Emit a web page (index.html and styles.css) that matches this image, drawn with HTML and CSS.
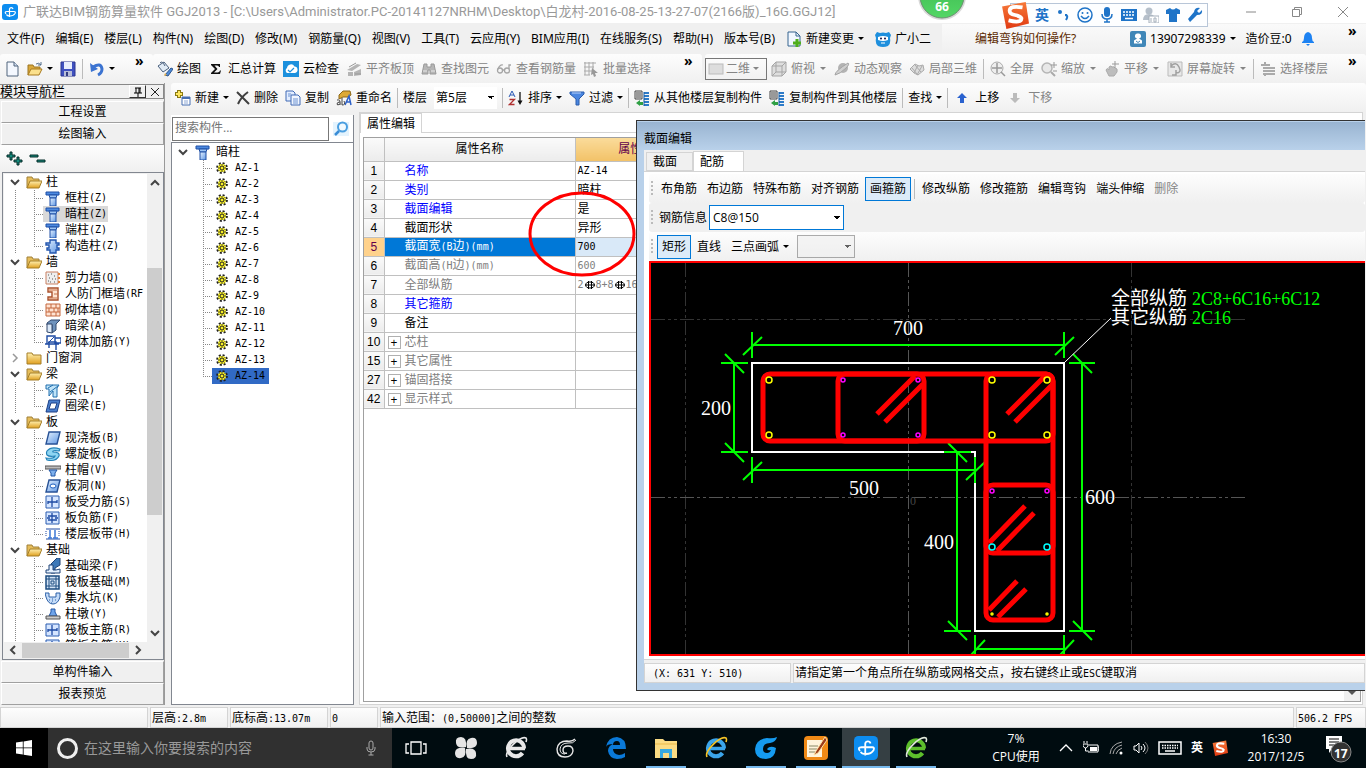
FILE: index.html
```html
<!DOCTYPE html>
<html lang="zh-CN">
<head>
    <meta charset="UTF-8">
    <meta name="viewport" content="width=device-width, initial-scale=1.0">
    <title>广联达BIM钢筋算量软件 GGJ2013</title>
    <link rel="stylesheet" href="styles.css">
</head>
<body>
<!-- icon sprite -->
<svg class="sprite" aria-hidden="true">
    <defs>
        <linearGradient id="gFolder" x1="0" y1="0" x2="0" y2="1"><stop offset="0" stop-color="#fff0b0"/><stop offset="1" stop-color="#e0a020"/></linearGradient>
        <linearGradient id="gBlue" x1="0" y1="0" x2="1" y2="1"><stop offset="0" stop-color="#e6f2ff"/><stop offset="1" stop-color="#5d96e4"/></linearGradient>
        <linearGradient id="gBall" x1="0" y1="0" x2="0" y2="1"><stop offset="0" stop-color="#3ab34d"/><stop offset="1" stop-color="#53d765"/></linearGradient>
        <linearGradient id="gOrange" x1="0" y1="0" x2="0" y2="1"><stop offset="0" stop-color="#f77a3a"/><stop offset="1" stop-color="#e03a12"/></linearGradient>
    </defs>
    <symbol id="app" viewBox="0 0 16 16"><rect width="16" height="16" rx="3" fill="#0d8df0"/><path d="M11 5a1.800 1.800 0 0 0-3.500 0v8M4 10q-2-2.500 1-2.500h7q2 0 1 2-1.500 2.500-5 2.500-3 0-3.500-1.500" fill="none" stroke="#fff" stroke-width="1.200"/></symbol>
    <symbol id="new" viewBox="0 0 16 16"><path d="M3 1h7l4 4v10H3z" fill="#f4f8ff" stroke="#51647d"/><path d="M10 1v4h4" fill="#cfdcf0" stroke="#51647d"/></symbol>
    <symbol id="open" viewBox="0 0 16 16"><path d="M1 14V4h5l1 2h6v3" fill="#d9a83b" stroke="#9c7420"/><path d="M1 14l3-6h11l-3 6z" fill="#fbe08c" stroke="#a87a1e"/><path d="M9 3q3-2 5 1m0-3v3h-3" fill="none" stroke="#55708f"/></symbol>
    <symbol id="save" viewBox="0 0 16 16"><path d="M1 1h14v14H1z" fill="#3f51c0" stroke="#2c3690"/><path d="M4 1h8v7H4z" fill="#e8eefc"/><path d="M4 10h8v5H4z" fill="#b8bed8"/><path d="M6 11h2v4H6z" fill="#333c80"/></symbol>
    <symbol id="undo" viewBox="0 0 16 16"><path d="M4 6q8-5 9 2 0 4-4 6" fill="none" stroke="#3b73d1" stroke-width="3"/><path d="M1 2l1 9 7-3z" fill="#3b73d1"/></symbol>
    <symbol id="draw" viewBox="0 0 16 16"><path d="M1 5l6-4 5 6-6 4z" fill="#e1ebf5" stroke="#4b617e"/><path d="M3 2q2-3 5 3" fill="none" stroke="#4b617e"/><path d="M8 14l6-7 2 1-5 7z" fill="#4f8bd8" stroke="#2d568f"/><path d="M7 15l1-3 2 2z" fill="#e5b04b"/></symbol>
    <symbol id="sum" viewBox="0 0 16 16"><path d="M3 3h9v3h-1q0-1.500-2-1.500H6.500L9.500 8l-3.500 3.500h3.500q2 0 2.500-2h1L12 13H3v-1l4-4-4-4z" fill="#111"/></symbol>
    <symbol id="cloud" viewBox="0 0 16 16"><rect width="16" height="16" fill="#1c90dd"/><path d="M4 12a3 3 0 0 1 0-5 4 4 0 0 1 7.500-1.500A3.300 3.300 0 0 1 12 12z" fill="#fff"/><path d="M5 9l2 2 4-4" fill="none" stroke="#1c90dd" stroke-width="1.200"/></symbol>
    <symbol id="slab" viewBox="0 0 16 16"><path d="M1 9l10-6 4 1-9 6zM2 11h5v4H2zM8 11l7-3v6l-7 1z" fill="#b4b4b4"/><path d="M3 6l7-4M9 13h6" stroke="#999"/></symbol>
    <symbol id="find" viewBox="0 0 16 16"><path d="M3 3h3v3h4V3h3l2 10H9V9H7v4H1z" fill="#b6b6b6" stroke="#999"/><path d="M2 10h4M10 10h4" stroke="#e8e8e8"/></symbol>
    <symbol id="glasses" viewBox="0 0 16 16"><g fill="none" stroke="#a5a5a5" stroke-width="1.300"><circle cx="4" cy="9.500" r="2.500"/><circle cx="11" cy="9.500" r="2.500"/><path d="M6.500 9h2M2 8q2-5 5-4M13 8V4h2"/></g></symbol>
    <symbol id="batch" viewBox="0 0 16 16"><path d="M1 2h12M1 6h10M1 10h8M2 1v13M6 1v13M10 1v7M1 14h6" stroke="#aaa"/><path d="M9 7l6 5h-3l1 3-2 1-1-3-2 1z" fill="#999"/></symbol>
    <symbol id="flat" viewBox="0 0 16 16"><rect x="1" y="3" width="14" height="10" fill="#ddd" stroke="#bbb"/></symbol>
    <symbol id="cube" viewBox="0 0 16 16"><path d="M1 5l4-4h10v10l-4 4H1z" fill="#dedede" stroke="#a5a5a5"/><path d="M1 5h10v10M11 5l4-4M5 1v10h10M5 11l-4 4" fill="none" stroke="#a5a5a5"/></symbol>
    <symbol id="orbit" viewBox="0 0 16 16"><circle cx="9" cy="7" r="5" fill="#b3b3b3"/><path d="M1 14Q1 10 14 2q2 1-2 5-6 6-11 7z" fill="#cfcfcf" stroke="#a3a3a3"/></symbol>
    <symbol id="part3d" viewBox="0 0 16 16"><path d="M1 8l5-5 4 2 4-1 1 5-6 5-4-2z" fill="#ddd" stroke="#aaa"/><path d="M3 7l5 6M6 4l6 7M9 4l-4 8M13 5l-5 9" stroke="#aaa"/></symbol>
    <symbol id="full" viewBox="0 0 16 16"><circle cx="7" cy="7" r="6" fill="#eee" stroke="#aaa"/><path d="M7 2v10M2 7h10M11 11l4 4" stroke="#999" stroke-width="1.500"/></symbol>
    <symbol id="zoomi" viewBox="0 0 16 16"><circle cx="6" cy="7" r="5" fill="#e8e8e8" stroke="#b5b5b5" stroke-width="1.500"/><path d="M10 11l4 4" stroke="#aaa" stroke-width="2"/><path d="M13 1v6M10 4h6M12 10h4" stroke="#999"/></symbol>
    <symbol id="pan" viewBox="0 0 16 16"><path d="M2 9q1-3 3 0l0-3q2-2 3 0 2-1 3 1 3 0 2 4l-3 4H5z" fill="#bdbdbd" stroke="#aaa"/><path d="M11 0v7M8 3h7" stroke="#999"/></symbol>
    <symbol id="rot" viewBox="0 0 16 16"><path d="M1 1h14v14H1z" fill="#e8e8e8" stroke="#bbb"/><path d="M4 5q5-5 8 1t-3 6M4 2v4h4M9 9v5h-4" fill="none" stroke="#a0a0a0" stroke-width="1.500"/></symbol>
    <symbol id="floors" viewBox="0 0 16 16"><path d="M1 4h9M3 7h12M3 10h12M3 13h12M5 4V1M5 13v2" stroke="#aaa" stroke-width="2"/></symbol>
    <symbol id="change" viewBox="0 0 16 16"><path d="M2 1h8l4 4v10H2z" fill="#f1f7ff" stroke="#36648f"/><path d="M10 1v4h4" fill="none" stroke="#36648f"/><path d="M11 8v8M7 12h8" stroke="#4fae1d" stroke-width="3"/></symbol>
    <symbol id="mascot" viewBox="0 0 16 16"><path d="M0 4l2-3 3 1q3-1 6 0l3-1 2 3-1 3q1 6-2 8-5 2-10 0-3-2-2-8z" fill="#1e8fdd"/><path d="M3 6q5-2 10 0v3q-5 2-10 0z" fill="#fff"/><circle cx="6" cy="7.500" r="1" fill="#114"/><circle cx="10" cy="7.500" r="1" fill="#114"/><path d="M6 12h4" stroke="#fff"/></symbol>
    <symbol id="user" viewBox="0 0 16 16"><rect width="16" height="16" rx="2" fill="#4087b8"/><path d="M8 2.500a2.500 2.500 0 0 1 1 5l3 2v3H4v-3l3-2a2.500 2.500 0 0 1 1-5z" fill="#fff"/><path d="M6 10l2 1.500 2-1.500" fill="none" stroke="#4087b8"/></symbol>
    <symbol id="bell" viewBox="0 0 16 16"><path d="M8 1q4 1 4 6 0 3 2 4v1H2v-1q2-1 2-4 0-5 4-6z" fill="#1d82f2"/><path d="M6 13h4l-2 2z" fill="#1d82f2"/></symbol>
    <symbol id="create" viewBox="0 0 16 16"><path d="M4 0v8M0 4h8" stroke="#8a7a14" stroke-width="4"/><path d="M4 1v6M1 4h6" stroke="#ffe761" stroke-width="2"/><path d="M7 7h8v8H7z" fill="#fff" stroke="#466fb2"/><path d="M7 8h8" stroke="#466fb2" stroke-width="2"/><path d="M9 11h4M9 13h4" stroke="#8fa9d6"/></symbol>
    <symbol id="del" viewBox="0 0 14 14"><path d="M1 1q6 6 12 12M12 1Q5 6 2 13" fill="none" stroke="#404040" stroke-width="2"/></symbol>
    <symbol id="copy" viewBox="0 0 16 16"><path d="M1 1h7l2 2v8H1z" fill="#e2edff" stroke="#406ab5"/><path d="M6 5h7l2 2v8H6z" fill="#f1f6ff" stroke="#406ab5"/><path d="M8 9h5M8 11h5M8 13h5M3 4h3M3 6h2" stroke="#6c93d2"/></symbol>
    <symbol id="rename" viewBox="0 0 16 16"><path d="M3 5l4-4h7l1 4-3 2H7L3 9z" fill="#dda936" stroke="#8b6718"/><path d="M9 15l4-9 2 9M10 12h4" fill="none" stroke="#2e61c8" stroke-width="1.500"/><path d="M1 10q4-1 3 5M4 12q-3 0-3 2t3 0M6 8v7q4 0 2-4" fill="none" stroke="#444"/></symbol>
    <symbol id="sort" viewBox="0 0 16 16"><path d="M1 7l3-6 3 6M2 5h4" fill="none" stroke="#2859b5"/><path d="M1.500 9.500h5l-5 5h5" fill="none" stroke="#b03030" stroke-width="1.300"/><path d="M12 2v11" stroke="#111" stroke-width="1.300"/><path d="M9.500 10.500h5L12 15z" fill="#111"/></symbol>
    <symbol id="filter" viewBox="0 0 16 16"><path d="M1 2h14v2l-5 5v6H7V9L1 4z" fill="#4a86e0" stroke="#2b5cab"/><path d="M3 3h9" stroke="#b9d3fb"/></symbol>
    <symbol id="floorcopy" viewBox="0 0 16 16"><path d="M1 1h7v8H1z" fill="#eee" stroke="#444"/><path d="M2 3h5M2 5h5M2 7h5" stroke="#444"/><path d="M10 3h5M10 6h5M10 9h5M10 12h5M10 15h5" stroke="#2d7bc8" stroke-width="2"/><path d="M10 2v14" stroke="#1a5ca0"/><path d="M2 13l4-3v2h3v3H6v1z" fill="#2fa044"/></symbol>
    <symbol id="up" viewBox="0 0 10 10"><path d="M5 0l5 5H7v5H3V5H0z" fill="#2a62cf"/></symbol>
    <symbol id="down" viewBox="0 0 10 10"><path d="M5 10l5-5H7V0H3v5H0z" fill="#bbb"/></symbol>
    <symbol id="search" viewBox="0 0 16 16"><path d="M0 1h16v14H0z" fill="#e4f3fd"/><circle cx="9.500" cy="6" r="4.500" fill="#f2faff" stroke="#4a9ee0" stroke-width="2"/><path d="M6 10l-4 4" stroke="#3a8dd6" stroke-width="2.500"/></symbol>
    <symbol id="chev" viewBox="0 0 10 10"><path d="M1 3l4 4 4-4" fill="none" stroke="#444" stroke-width="2"/></symbol>
    <symbol id="chevr" viewBox="0 0 10 10"><path d="M3 1l4 4-4 4" fill="none" stroke="#999" stroke-width="1.500"/></symbol>
    <!-- tree icons -->
    <symbol id="folder" viewBox="0 0 16 16"><path d="M1 14V3h5l1 2h6v3" fill="#e6bd5a" stroke="#a08038"/><path d="M1 14l3-7h12l-3 7z" fill="url(#gFolder)" stroke="#a57f28"/></symbol>
    <symbol id="folderc" viewBox="0 0 16 16"><path d="M1 3h5l1 2h8v9H1z" fill="url(#gFolder)" stroke="#a57f28"/></symbol>
    <symbol id="col" viewBox="0 0 16 16"><path d="M1 2h13v3H1z" fill="#4d8ae0" stroke="#1f4fa5"/><path d="M4 5h8l-1 3H5z" fill="#9cc4f5" stroke="#1f4fa5"/><path d="M5 8h6v8H5z" fill="url(#gBlue)" stroke="#1f4fa5"/></symbol>
    <symbol id="gzz" viewBox="0 0 16 16"><path d="M5 2h6v3h3v2h-2v3h2v2h-3v3H5v-3H2v-2h2V7H1V5h4z" fill="url(#gBlue)" stroke="#2356ae" stroke-width="1.400"/></symbol>
    <symbol id="wall" viewBox="0 0 16 16"><path d="M1 2h12v12H1z" fill="#eee" stroke="#c98062"/><path d="M3 5h1M6 4h1M9 6h1M4 8h1M7 9h1M10 9h1M5 12h1M9 12h1M3 11h1" stroke="#555"/><path d="M13 4h2M13 8h2M13 12h2" stroke="#e08038" stroke-width="2"/></symbol>
    <symbol id="rfwall" viewBox="0 0 16 16"><path d="M3 2h10v12H3v-3h4V6H3z" fill="#ffe5d3" stroke="#a9502c" stroke-width="1.400"/><path d="M4 4h8M9 8h4M4 12h8" stroke="#c67149"/></symbol>
    <symbol id="brick" viewBox="0 0 16 16"><path d="M1 2h14v12H1z" fill="#ffe3d2" stroke="#c5693e"/><path d="M1 6h14M1 10h14M6 2v4M11 2v4M4 6v4M9 6v4M13 6v4M6 10v4M11 10v4" stroke="#c5693e"/></symbol>
    <symbol id="albeam" viewBox="0 0 16 16"><path d="M2 5l4-3h9l-4 4v6l-4 3V7H2z" fill="#6f93bd" stroke="#32496d"/><path d="M2 6h5v9l-5-1z" fill="#dce9f8" stroke="#32496d"/></symbol>
    <symbol id="rebarw" viewBox="0 0 16 16"><path d="M2 2h8v8H2zM0 10h14M4 14V8h7v8M10 4h6v5h-6" fill="none" stroke="#1e4ba4" stroke-width="1.400"/><path d="M3 9l6-6" stroke="#1e4ba4"/></symbol>
    <symbol id="beam" viewBox="0 0 16 16"><path d="M1 3h13l-2 3v9H8V9l-4 5V7H1z" fill="#bfe3f8" stroke="#216fae"/><path d="M3 6l5-3M5 10l8-6" stroke="#216fae"/></symbol>
    <symbol id="ring" viewBox="0 0 16 16"><path d="M4 2h11l-3 12H1z" fill="#4a7fcc" stroke="#1c3f86"/><path d="M6 5h6l-2 6H4z" fill="#fff" stroke="#1c3f86"/></symbol>
    <symbol id="plate" viewBox="0 0 16 16"><path d="M4 2h11l-3 12H1z" fill="url(#gBlue)" stroke="#285296" stroke-width="1.400"/></symbol>
    <symbol id="spiral" viewBox="0 0 16 16"><path d="M2 5Q6 0 15 3l-1 2Q7 4 8 6q7 0 6 4-3 6-12 4l-1-2q8 1 9-2-6 1-8-1-1-2 0-4z" fill="#8ed5f2" stroke="#2482b8" stroke-width="1.200"/></symbol>
    <symbol id="cap" viewBox="0 0 16 16"><path d="M0 4h16v3H0z" fill="#bbb" stroke="#555"/><path d="M4 8h8l-2 3v3H6v-3z" fill="#7eb0ec" stroke="#2357a6"/></symbol>
    <symbol id="hole" viewBox="0 0 16 16"><path d="M4 2h11l-3 12H1z" fill="url(#gBlue)" stroke="#285296" stroke-width="1.400"/><ellipse cx="8" cy="8" rx="3" ry="2" fill="#fff" stroke="#1d5fc0"/></symbol>
    <symbol id="bar1" viewBox="0 0 16 16"><path d="M1 2h13v12H1z" fill="#d6e6ff" stroke="#2a5cb0"/><path d="M7 3v10M3 8h9M3 10V7M12 6v3" fill="none" stroke="#1e4ba4" stroke-width="1.300"/></symbol>
    <symbol id="bar2" viewBox="0 0 16 16"><path d="M1 2h13v12H1z" fill="#d6e6ff" stroke="#2a5cb0"/><path d="M7 3v10M3 6h9M3 10h9M2 8h3M10 8h3" fill="none" stroke="#1e4ba4" stroke-width="1.300"/></symbol>
    <symbol id="strip" viewBox="0 0 16 16"><path d="M1 3h14M1 13h14" stroke="#1e4ba4" stroke-width="1"/><path d="M5 4v8M10 4v8M3 12h4M8 12h5" stroke="#3d78d6" stroke-width="1.500"/><path d="M1 5v6M14 5v6" stroke="#1e4ba4" stroke-dasharray="1 1"/></symbol>
    <symbol id="fbeam" viewBox="0 0 16 16"><path d="M6 15V6l6-6h3v7l-5 3v5z" fill="#3c78b8" stroke="#1e4276"/><path d="M1 12h3V7h4v5h3l4-1v4H1z" fill="#e4f1ff" stroke="#1e4276"/></symbol>
    <symbol id="raft" viewBox="0 0 16 16"><path d="M1 2h13v13H1z" fill="#d3e3f5" stroke="#1d4c80" stroke-width="1.500"/><path d="M4 2v13M11 2v13M1 5h13M1 12h13M6 7h3v3H6z" fill="none" stroke="#1d4c80"/></symbol>
    <symbol id="pit" viewBox="0 0 16 16"><path d="M0 3h4v4h7V3h4v4q-2 7-7 7T1 7z" fill="#c5dcf8" stroke="#2d61a8"/><path d="M4 10h1M7 11h1M10 10h1M7 9h1M6 13h1" stroke="#2d61a8"/></symbol>
    <symbol id="pier" viewBox="0 0 16 16"><path d="M6 3h4v3l2 4H4l2-4z" fill="#6ea4ea" stroke="#2357a6"/><path d="M1 10h14v3H1z" fill="#ccc" stroke="#555"/></symbol>
    <symbol id="gear" viewBox="0 0 12 12"><circle cx="6" cy="6" r="4.800" fill="none" stroke="#222" stroke-width="2.200" stroke-dasharray="2 1.770"/><circle cx="6" cy="6" r="4" fill="#f6ee28"/><path d="M6 2v8M2 6h8M3.500 3.500l5 5M8.500 3.500l-5 5" stroke="#222" stroke-width=".8"/><circle cx="6" cy="6" r="1.700" fill="#f6ee28" stroke="#222" stroke-width=".6"/></symbol>
    <symbol id="rebar" viewBox="0 0 10 10"><ellipse cx="5" cy="5" rx="4.300" ry="3" fill="none" stroke="#000" stroke-width="1"/><path d="M3.500 1v8M6.500 1v8M0 5h10" stroke="#000"/></symbol>
    <!-- taskbar icons -->
    <symbol id="win" viewBox="0 0 16 16"><path d="M0 2.500l6.800-1v6H0zM7.600 1.400L16 0v7.500H7.600zM0 8.300h6.800v6.200L0 13.500zM7.600 8.300H16V16l-8.400-1.300z" fill="#fff"/></symbol>
    <symbol id="mic" viewBox="0 0 16 16"><rect x="6" y="1" width="4" height="9" rx="2" fill="none" stroke="#aaa"/><path d="M4 7v2q0 3 4 3t4-3V7M8 12v3M5.500 15h5" fill="none" stroke="#aaa"/></symbol>
    <symbol id="taskview" viewBox="0 0 24 24"><path d="M7 6h10v12H7zM5 8H2v9h3M19 8h3v9h-3" fill="none" stroke="#fff" stroke-width="1.300"/></symbol>
    <symbol id="clover" viewBox="0 0 24 24"><g fill="#e5e5e5"><path d="M12 11Q3 13 2 7t5-6q6 0 5 10z"/><path d="M13 12q-2-9 4-10t6 5q0 6-10 5z"/><path d="M12 13q9-2 10 4t-5 6q-6 0-5-10z"/><path d="M11 12q2 9-4 10t-6-5q0-6 10-5z"/></g></symbol>
    <symbol id="eie" viewBox="0 0 24 24"><path d="M20 12.500A8 8 0 1 0 18.500 17" fill="none" stroke="currentColor" stroke-width="4"/><path d="M5 12.500h16" stroke="currentColor" stroke-width="3.500"/><path d="M3 21C0 15 17-1 22 2q1 1 0 4" fill="none" stroke="var(--swoosh, currentColor)" stroke-width="1.600"/></symbol>
    <symbol id="gswirl" viewBox="0 0 24 24"><path d="M21 3q-3 3-8 2-9 0-10 8 0 8 8 8 7 0 8-6 0-5-5-5-5 0-5 4t4 3" fill="none" stroke="currentColor" stroke-width="1.400"/><path d="M22 4q-3 4-8 3-7 0-8 6 0 5 5 5" fill="none" stroke="currentColor" stroke-width="1"/></symbol>
    <symbol id="gsolid" viewBox="0 0 24 24"><path d="M23 1q-1 5-7 6-7 0-7 6 0 4 4 4 3 0 4-3-3 1-4-1 3-4 9-1-1 11-10 11Q1 23 1 13 2 3 13 2q6 1 10-1z" fill="#159bf0"/></symbol>
    <symbol id="edge" viewBox="0 0 24 24"><path d="M2 11Q4 1 13 1q9 1 9 12H9q0 5 6 6 3 0 6-2v4q-3 2-8 2-8-1-9-8 0-5 5-7-6 0-7 3zM9 9h7q0-4-3-4-4 0-4 4z" fill="#0a79d8"/></symbol>
    <symbol id="explorer" viewBox="0 0 24 24"><path d="M1 3h8l2 2h12v17H1z" fill="#fbdc84"/><path d="M1 8h22" stroke="#e9b949"/><path d="M6 22v-9h12v9h-3v-5H9v5z" fill="#37a9e0"/></symbol>
    <symbol id="note" viewBox="0 0 24 24"><rect width="24" height="24" rx="4" fill="#f08a16"/><path d="M3 4h15v17H3z" fill="#fff4dc"/><path d="M5 10h9M5 13h8M5 16h6" stroke="#886"/><path d="M21 1L12 15l-2 4 4-2 9-13z" fill="#9e3b1b" stroke="#ffe0a0"/></symbol>
    <symbol id="sogou" viewBox="0 0 26 26"><path d="M1 5L23 1l3 20-21 5z" fill="url(#gOrange)"/><path d="M20 6Q8 4 8 9q0 3 5 4t6 3q0 5-12 2" fill="none" stroke="#fff" stroke-width="3.500"/></symbol>
    <symbol id="keyboard" viewBox="0 0 24 16"><rect x="1" y="2" width="22" height="12" fill="none" stroke="currentColor" stroke-width="1.500"/><path d="M4 5.500h16M4 8h16" stroke="currentColor" stroke-width="1.300" stroke-dasharray="1.500 1"/><path d="M7 11h10" stroke="currentColor" stroke-width="1.500"/></symbol>
</svg>

<header class="titlebar">
    <svg class="i16"><use href="#app"/></svg>
    <span class="title">广联达BIM钢筋算量软件 GGJ2013 - [C:\Users\Administrator.PC-20141127NRHM\Desktop\白龙村-2016-08-25-13-27-07(2166版)_16G.GGJ12]</span>
    <div class="win-buttons">
        <button aria-label="最小化"><svg viewBox="0 0 12 12"><path d="M1 6h10" stroke="#888"/></svg></button>
        <button aria-label="还原"><svg viewBox="0 0 12 12"><path d="M1.500 3.500h7v7h-7zM3.500 3V1.500h7v7H9" fill="none" stroke="#888"/></svg></button>
        <button aria-label="关闭"><svg viewBox="0 0 12 12"><path d="M1 1l10 10M11 1L1 11" stroke="#888"/></svg></button>
    </div>
</header>

<nav class="menubar">
    <button>文件(F)</button><button>编辑(E)</button><button>楼层(L)</button><button>构件(N)</button><button>绘图(D)</button><button>修改(M)</button><button>钢筋量(Q)</button><button>视图(V)</button><button>工具(T)</button><button>云应用(Y)</button><button>BIM应用(I)</button><button>在线服务(S)</button><button>帮助(H)</button><button>版本号(B)</button>
    <button><svg class="i16"><use href="#change"/></svg>新建变更<i class="arrow"></i></button>
    <button><svg class="i16"><use href="#mascot"/></svg>广小二</button>
    <div class="menu-right">
        <a href="#" class="hint">编辑弯钩如何操作?</a>
        <button><svg class="i16"><use href="#user"/></svg>13907298339<i class="arrow"></i></button>
        <button class="coins">造价豆:0<svg class="i16"><use href="#bell"/></svg></button>
        <button class="more" aria-label="更多">»</button>
    </div>
</nav>

<div class="toolrow">
    <div class="toolbar file-tools">
        <button aria-label="新建"><svg class="i16"><use href="#new"/></svg></button>
        <button aria-label="打开"><svg class="i16"><use href="#open"/></svg><i class="arrow"></i></button>
        <button aria-label="保存"><svg class="i16"><use href="#save"/></svg></button>
        <i class="sep"></i>
        <button aria-label="撤销"><svg class="i16"><use href="#undo"/></svg><i class="arrow"></i></button>
        <button class="more" aria-label="更多">»</button>
    </div>
    <div class="toolbar calc-tools">
        <button><svg class="i16"><use href="#draw"/></svg>绘图</button>
        <button><svg class="i16"><use href="#sum"/></svg>汇总计算</button>
        <button><svg class="i16"><use href="#cloud"/></svg>云检查</button>
        <button disabled><svg class="i16"><use href="#slab"/></svg>平齐板顶</button>
        <button disabled><svg class="i16"><use href="#find"/></svg>查找图元</button>
        <button disabled><svg class="i16"><use href="#glasses"/></svg>查看钢筋量</button>
        <button disabled><svg class="i16"><use href="#batch"/></svg>批量选择</button>
        <button class="more" aria-label="更多">»</button>
    </div>
    <div class="toolbar view-tools">
        <button disabled class="boxed"><svg class="i16"><use href="#flat"/></svg>二维<i class="arrow"></i></button>
        <button disabled><svg class="i16"><use href="#cube"/></svg>俯视<i class="arrow"></i></button>
        <button disabled><svg class="i16"><use href="#orbit"/></svg>动态观察</button>
        <button disabled><svg class="i16"><use href="#part3d"/></svg>局部三维</button>
        <i class="sep"></i>
        <button disabled><svg class="i16"><use href="#full"/></svg>全屏</button>
        <button disabled><svg class="i16"><use href="#zoomi"/></svg>缩放<i class="arrow"></i></button>
        <button disabled><svg class="i16"><use href="#pan"/></svg>平移<i class="arrow"></i></button>
        <button disabled><svg class="i16"><use href="#rot"/></svg>屏幕旋转<i class="arrow"></i></button>
        <i class="sep"></i>
        <button disabled><svg class="i16"><use href="#floors"/></svg>选择楼层</button>
        <button class="more" aria-label="更多">»</button>
    </div>
</div>

<main class="workspace">
    <aside class="nav">
        <div class="nav-head"><span>模块导航栏</span>
            <button class="pin" aria-label="固定"><svg viewBox="0 0 12 12"><path d="M3 2h6M4 2v5M8 2v5M7 2v5M2 7h8M6 7v4" fill="none" stroke="#000"/></svg></button>
            <button aria-label="关闭"><svg viewBox="0 0 12 12"><path d="M2 2l8 8M10 2l-8 8" stroke="#222"/></svg></button>
        </div>
        <button class="nav-btn">工程设置</button>
        <button class="nav-btn">绘图输入</button>
        <div class="nav-tools">
            <button aria-label="全部展开"><svg viewBox="0 0 18 16"><g fill="#148a7c" stroke="#062c28"><path d="M4 1h2v3h3v2H6v3H4V6H1V4h3zM11 6h2v3h3v2h-3v3h-2v-3H8V9h3z"/></g></svg></button>
            <button aria-label="全部折叠"><svg viewBox="0 0 18 16"><g fill="#148a7c" stroke="#062c28"><path d="M1 4h8v2H1zM8 9h8v2H8z"/></g></svg></button>
        </div>
        <div class="nav-tree">
            <div class="tree-view">
                <ul class="tree">
                    <li><span class="node"><svg class="i10"><use href="#chev"/></svg><svg class="i16"><use href="#folder"/></svg>柱</span>
                        <ul>
                            <li><a href="#"><svg class="i16"><use href="#col"/></svg>框柱<small>(Z)</small></a></li>
                            <li><a href="#" class="current"><svg class="i16"><use href="#col"/></svg>暗柱<small>(Z)</small></a></li>
                            <li><a href="#"><svg class="i16"><use href="#col"/></svg>端柱<small>(Z)</small></a></li>
                            <li><a href="#"><svg class="i16"><use href="#gzz"/></svg>构造柱<small>(Z)</small></a></li>
                        </ul>
                    </li>
                    <li><span class="node"><svg class="i10"><use href="#chev"/></svg><svg class="i16"><use href="#folder"/></svg>墙</span>
                        <ul>
                            <li><a href="#"><svg class="i16"><use href="#wall"/></svg>剪力墙<small>(Q)</small></a></li>
                            <li><a href="#"><svg class="i16"><use href="#rfwall"/></svg>人防门框墙<small>(RF</small></a></li>
                            <li><a href="#"><svg class="i16"><use href="#brick"/></svg>砌体墙<small>(Q)</small></a></li>
                            <li><a href="#"><svg class="i16"><use href="#albeam"/></svg>暗梁<small>(A)</small></a></li>
                            <li><a href="#"><svg class="i16"><use href="#rebarw"/></svg>砌体加筋<small>(Y)</small></a></li>
                        </ul>
                    </li>
                    <li><span class="node"><svg class="i10"><use href="#chevr"/></svg><svg class="i16"><use href="#folderc"/></svg>门窗洞</span></li>
                    <li><span class="node"><svg class="i10"><use href="#chev"/></svg><svg class="i16"><use href="#folder"/></svg>梁</span>
                        <ul>
                            <li><a href="#"><svg class="i16"><use href="#beam"/></svg>梁<small>(L)</small></a></li>
                            <li><a href="#"><svg class="i16"><use href="#ring"/></svg>圈梁<small>(E)</small></a></li>
                        </ul>
                    </li>
                    <li><span class="node"><svg class="i10"><use href="#chev"/></svg><svg class="i16"><use href="#folder"/></svg>板</span>
                        <ul>
                            <li><a href="#"><svg class="i16"><use href="#plate"/></svg>现浇板<small>(B)</small></a></li>
                            <li><a href="#"><svg class="i16"><use href="#spiral"/></svg>螺旋板<small>(B)</small></a></li>
                            <li><a href="#"><svg class="i16"><use href="#cap"/></svg>柱帽<small>(V)</small></a></li>
                            <li><a href="#"><svg class="i16"><use href="#hole"/></svg>板洞<small>(N)</small></a></li>
                            <li><a href="#"><svg class="i16"><use href="#bar1"/></svg>板受力筋<small>(S)</small></a></li>
                            <li><a href="#"><svg class="i16"><use href="#bar2"/></svg>板负筋<small>(F)</small></a></li>
                            <li><a href="#"><svg class="i16"><use href="#strip"/></svg>楼层板带<small>(H)</small></a></li>
                        </ul>
                    </li>
                    <li><span class="node"><svg class="i10"><use href="#chev"/></svg><svg class="i16"><use href="#folder"/></svg>基础</span>
                        <ul>
                            <li><a href="#"><svg class="i16"><use href="#fbeam"/></svg>基础梁<small>(F)</small></a></li>
                            <li><a href="#"><svg class="i16"><use href="#raft"/></svg>筏板基础<small>(M)</small></a></li>
                            <li><a href="#"><svg class="i16"><use href="#pit"/></svg>集水坑<small>(K)</small></a></li>
                            <li><a href="#"><svg class="i16"><use href="#pier"/></svg>柱墩<small>(Y)</small></a></li>
                            <li><a href="#"><svg class="i16"><use href="#bar1"/></svg>筏板主筋<small>(R)</small></a></li>
                            <li><a href="#"><svg class="i16"><use href="#bar2"/></svg>筏板负筋<small>(X)</small></a></li>
                        </ul>
                    </li>
                </ul>
            </div>
            <div class="vscroll">
                <svg class="i10"><path d="M1 7l4-4 4 4" fill="none" stroke="#444" stroke-width="2"/></svg>
                <i class="thumb"></i>
                <svg class="i10"><use href="#chev"/></svg>
            </div>
            <div class="hscroll">
                <svg class="i10"><path d="M7 1L3 5l4 4" fill="none" stroke="#444" stroke-width="2"/></svg>
                <i class="thumb"></i>
                <svg class="i10"><path d="M3 1l4 4-4 4" fill="none" stroke="#444" stroke-width="2"/></svg>
            </div>
        </div>
        <button class="nav-btn">单构件输入</button>
        <button class="nav-btn">报表预览</button>
    </aside>

    <section class="editor">
        <div class="toolbar component-tools">
            <button><svg class="i16"><use href="#create"/></svg>新建<i class="arrow"></i></button>
            <button><svg class="i14"><use href="#del"/></svg>删除</button>
            <button><svg class="i16"><use href="#copy"/></svg>复制</button>
            <button><svg class="i16"><use href="#rename"/></svg>重命名</button>
            <i class="sep"></i>
            <label for="floor">楼层</label>
            <select id="floor" class="combo floor"><option>第5层</option></select>
            <i class="sep"></i>
            <button><svg class="i16"><use href="#sort"/></svg>排序<i class="arrow"></i></button>
            <button><svg class="i16"><use href="#filter"/></svg>过滤<i class="arrow"></i></button>
            <i class="sep"></i>
            <button><svg class="i16"><use href="#floorcopy"/></svg>从其他楼层复制构件</button>
            <button><svg class="i16"><use href="#floorcopy"/></svg>复制构件到其他楼层</button>
            <i class="sep"></i>
            <button>查找<i class="arrow"></i></button>
            <i class="sep"></i>
            <button class="move"><svg class="i10"><use href="#up"/></svg>上移</button>
            <button class="move" disabled><svg class="i10"><use href="#down"/></svg>下移</button>
        </div>
        <div class="panels">
            <div class="components">
                <div class="search">
                    <input type="text" placeholder="搜索构件..." aria-label="搜索构件">
                    <button aria-label="搜索"><svg class="i16"><use href="#search"/></svg></button>
                </div>
                <div class="component-list">
                    <span class="root"><svg class="i10"><use href="#chev"/></svg><svg class="i16"><use href="#col"/></svg>暗柱</span>
                    <ul>
                        <li><a href="#"><svg class="i12"><use href="#gear"/></svg>AZ-1</a></li>
                        <li><a href="#"><svg class="i12"><use href="#gear"/></svg>AZ-2</a></li>
                        <li><a href="#"><svg class="i12"><use href="#gear"/></svg>AZ-3</a></li>
                        <li><a href="#"><svg class="i12"><use href="#gear"/></svg>AZ-4</a></li>
                        <li><a href="#"><svg class="i12"><use href="#gear"/></svg>AZ-5</a></li>
                        <li><a href="#"><svg class="i12"><use href="#gear"/></svg>AZ-6</a></li>
                        <li><a href="#"><svg class="i12"><use href="#gear"/></svg>AZ-7</a></li>
                        <li><a href="#"><svg class="i12"><use href="#gear"/></svg>AZ-8</a></li>
                        <li><a href="#"><svg class="i12"><use href="#gear"/></svg>AZ-9</a></li>
                        <li><a href="#"><svg class="i12"><use href="#gear"/></svg>AZ-10</a></li>
                        <li><a href="#"><svg class="i12"><use href="#gear"/></svg>AZ-11</a></li>
                        <li><a href="#"><svg class="i12"><use href="#gear"/></svg>AZ-12</a></li>
                        <li><a href="#"><svg class="i12"><use href="#gear"/></svg>AZ-13</a></li>
                        <li><a href="#" class="selected"><svg class="i12"><use href="#gear"/></svg>AZ-14</a></li>
                    </ul>
                </div>
            </div>
            <div class="properties">
                <div class="tabs"><button class="tab active">属性编辑</button></div>
                <div class="prop-body">
                    <table class="props">
                        <thead><tr><th class="num"></th><th class="name">属性名称</th><th class="value">属性值</th></tr></thead>
                        <tbody>
                            <tr><th>1</th><td class="link">名称</td><td><small>AZ-14</small></td></tr>
                            <tr><th>2</th><td class="link">类别</td><td>暗柱</td></tr>
                            <tr><th>3</th><td class="link">截面编辑</td><td>是</td></tr>
                            <tr><th>4</th><td>截面形状</td><td>异形</td></tr>
                            <tr class="active"><th>5</th><td>截面宽<small>(B</small>边<small>)(mm)</small></td><td><small>700</small></td></tr>
                            <tr class="dim"><th>6</th><td>截面高<small>(H</small>边<small>)(mm)</small></td><td><small>600</small></td></tr>
                            <tr class="dim"><th>7</th><td>全部纵筋</td><td><small>2<svg class="i10"><use href="#rebar"/></svg>8+8<svg class="i10"><use href="#rebar"/></svg>16+6</small></td></tr>
                            <tr><th>8</th><td class="link">其它箍筋</td><td></td></tr>
                            <tr><th>9</th><td>备注</td><td></td></tr>
                            <tr class="dim group"><th>10</th><td><button aria-label="展开">+</button>芯柱</td><td></td></tr>
                            <tr class="dim group"><th>15</th><td><button aria-label="展开">+</button>其它属性</td><td></td></tr>
                            <tr class="dim group"><th>27</th><td><button aria-label="展开">+</button>锚固搭接</td><td></td></tr>
                            <tr class="dim group"><th>42</th><td><button aria-label="展开">+</button>显示样式</td><td></td></tr>
                        </tbody>
                    </table>
                    <svg class="i16 scroll-end"><path d="M4 6h8l-4 4z" fill="#555"/></svg>
                </div>
            </div>
        </div>
    </section>
</main>

<footer class="statusbar">
    <span class="s-blank"></span>
    <span class="s-height">层高<small>:2.8m</small></span>
    <span class="s-base">底标高<small>:13.07m</small></span>
    <span class="s-zero"><small>0</small></span>
    <span class="s-msg">输入范围：<small>(0,50000]</small>之间的整数</span>
    <span class="s-fps"><small>506.2 FPS</small></span>
</footer>

<footer class="taskbar">
    <button class="start" aria-label="开始"><svg class="i16"><use href="#win"/></svg></button>
    <div class="cortana">
        <i class="ring"></i>
        <input type="text" placeholder="在这里输入你要搜索的内容" aria-label="搜索">
        <svg class="i16"><use href="#mic"/></svg>
    </div>
    <div class="apps">
        <button aria-label="任务视图"><svg><use href="#taskview"/></svg></button>
        <button aria-label="四叶草"><svg><use href="#clover"/></svg></button>
        <button aria-label="浏览器" class="white"><svg><use href="#eie"/></svg></button>
        <button aria-label="广联达" class="white"><svg><use href="#gswirl"/></svg></button>
        <button aria-label="Edge"><svg><use href="#edge"/></svg></button>
        <button aria-label="资源管理器" class="running"><svg><use href="#explorer"/></svg></button>
        <button aria-label="Internet Explorer" class="ie"><svg><use href="#eie"/></svg></button>
        <button aria-label="广联达服务" class="running"><svg><use href="#gsolid"/></svg></button>
        <button aria-label="便签" class="running"><svg><use href="#note"/></svg></button>
        <button aria-label="钢筋算量" class="running focus"><svg><use href="#app"/></svg></button>
        <button aria-label="360浏览器" class="green running"><svg><use href="#eie"/></svg></button>
    </div>
    <div class="cpu">7%<br>CPU使用</div>
    <div class="tray">
        <svg viewBox="0 0 16 16"><path d="M2 11l6-6 6 6" fill="none" stroke="#fff" stroke-width="1.300"/></svg>
        <svg viewBox="0 0 16 16"><path d="M6 5h9v7H5M15 7h1v3h-1" fill="none" stroke="#fff"/><path d="M7 7h7v4H7z" fill="#fff"/><path d="M1 1v2M4 1v2M0 4h5v2q-1 2-2.500 2T0 6zM2.500 8v3h3" fill="none" stroke="#fff"/></svg>
        <svg viewBox="0 0 16 16"><g fill="none" stroke="#aaa"><path d="M2 14Q3 4 14 2M5 14q1-7 9-9M8 14q1-4 6-6"/></g><circle cx="13" cy="13" r="1.500" fill="#fff"/></svg>
        <svg viewBox="0 0 16 16"><g fill="none" stroke="#fff"><path d="M1 6h2l3-3v10l-3-3H1zM8 6q2 2 0 4M10 4q4 4 0 8"/><path d="M12 2q6 6 0 12" stroke="#777"/></g></svg>
        <svg class="kb"><use href="#keyboard"/></svg>
        <span>英</span>
        <svg><use href="#sogou"/></svg>
    </div>
    <div class="clock">16:30<br>2017/12/5</div>
    <button class="notify" aria-label="通知"><svg viewBox="0 0 30 30"><path d="M2 3h16v13H8l-3 4v-4H2z" fill="#fff"/><path d="M5 6h10M5 9h10M5 12h7" stroke="#000"/><circle cx="17" cy="19" r="10" fill="#333" stroke="#888"/></svg><b>17</b></button>
</footer>

<!-- hand drawn mark over the property grid -->
<svg class="mark"><ellipse cx="54" cy="43" rx="52" ry="41" fill="none" stroke="#f00" stroke-width="3"/></svg>

<section class="dialog" aria-label="截面编辑">
    <h2>截面编辑</h2>
    <div class="dialog-body">
        <div class="tabs"><button class="tab">截面</button><button class="tab active">配筋</button></div>
        <div class="dialog-main">
            <div class="toolbar">
                <i class="grip"></i>
                <button>布角筋</button><button>布边筋</button><button>特殊布筋</button><button>对齐钢筋</button><button class="on">画箍筋</button>
                <i class="sep"></i>
                <button>修改纵筋</button><button>修改箍筋</button><button>编辑弯钩</button><button>端头伸缩</button><button disabled>删除</button>
            </div>
            <div class="toolbar plain">
                <i class="grip"></i>
                <label for="bar-info">钢筋信息</label>
                <select id="bar-info" class="combo info"><option>C8@150</option></select>
            </div>
            <div class="toolbar">
                <i class="grip"></i>
                <button class="on">矩形</button><button>直线</button><button>三点画弧<i class="arrow"></i></button>
                <select class="combo arc" aria-label="画弧方式" disabled><option></option></select>
            </div>
            <svg class="canvas">
                <g transform="translate(-651 -263)">
                    <g class="axis">
                        <path class="faint" d="M651 319.500h597M685.500 263v391M1131.500 263v391"/>
                        <path d="M651 497.500h597M908.500 263v391"/>
                    </g>
                    <path class="outline" d="M752 363h312v268h-89V452H752z"/>
                    <g class="dim-lines">
                        <path d="M752 345h312M752 332v26M1064 332v26M743 355l19-18M1055 355l19-18"/>
                        <path d="M734 363v89M721 363h27M721 452h27M725 354l19 19M725 443l19 19"/>
                        <path d="M752 470h223M752 457v26M975 457v26M743 480l19-18M966 480l19-18"/>
                        <path d="M957 452v179M944 452h27M944 631h27M948 443l19 19M948 621l19 19"/>
                        <path d="M1082 363v268M1069 363h26M1069 631h26M1073 354l19 19M1073 621l19 19"/>
                        <path d="M975 649h89M975 635v20M1064 635v20M971 655l14-15M1060 655l14-15"/>
                    </g>
                    <g class="stirrups">
                        <rect x="763" y="374" width="290" height="67" rx="7"/>
                        <rect x="838" y="374" width="86" height="67" rx="7"/>
                        <rect x="986" y="374" width="67" height="246" rx="7"/>
                        <rect x="986" y="485" width="67" height="68" rx="7"/>
                        <path d="M877 414l38-38M885 422l38-38M1007 414l38-38M1015 422l38-38"/>
                        <path d="M989 543l36-37M997 551l37-38M989 610l28-29M998 617l28-28"/>
                    </g>
                    <g class="bars">
                        <g stroke="#ff0"><circle cx="769" cy="380" r="3"/><circle cx="769" cy="435" r="3"/><circle cx="992" cy="380" r="3"/><circle cx="1047" cy="380" r="3"/><circle cx="992" cy="435" r="3"/><circle cx="1047" cy="435" r="3"/><circle cx="992" cy="614" r="1"/><circle cx="1047" cy="614" r="1"/></g>
                        <g stroke="#f0f"><circle cx="843" cy="380" r="2"/><circle cx="918" cy="380" r="2"/><circle cx="843" cy="435" r="2"/><circle cx="918" cy="435" r="2"/><circle cx="992" cy="491" r="2"/><circle cx="1047" cy="491" r="2"/></g>
                        <g stroke="#0ff"><circle cx="992" cy="547" r="3"/><circle cx="1047" cy="547" r="3"/></g>
                    </g>
                    <path d="M1065 362l46-44" stroke="#fff"/>
                    <g class="dim-text">
                        <text x="893" y="335">700</text><text x="701" y="415">200</text><text x="849" y="495">500</text><text x="924" y="549">400</text><text x="1085" y="504">600</text>
                        <text class="origin" x="910" y="505">0</text>
                    </g>
                    <g class="note-text">
                        <text x="1111" y="305">全部纵筋</text><text x="1111" y="324">其它纵筋</text>
                        <text class="spec" x="1192" y="305">2C8+6C16+6C12</text><text class="spec" x="1192" y="324">2C16</text>
                    </g>
                </g>
            </svg>
        </div>
        <div class="dialog-status"><span><small>(X: 631 Y: 510)</small></span><span>请指定第一个角点所在纵筋或网格交点，按右键终止或<small>ESC</small>键取消</span></div>
    </div>
</section>

<!-- floating tools of the desktop -->
<svg class="ball" viewBox="0 0 60 24"><circle cx="30" cy="-4" r="24" fill="#d8d8d8"/><circle cx="30" cy="-4" r="22" fill="url(#gBall)" stroke="#6b8f70"/><text x="30" y="11">66</text></svg>
<div class="ime">
    <svg class="ime-logo"><use href="#sogou"/></svg>
    <b>英</b>
    <svg viewBox="0 0 16 16"><circle cx="5" cy="5" r="2"/><path d="M10 8q4 0 1 5M10 8h2" fill="none" stroke="#1f74c8" stroke-width="2"/></svg>
    <svg viewBox="0 0 16 16"><circle cx="8" cy="8" r="7" fill="none" stroke="#1f74c8" stroke-width="1.500"/><circle cx="5.500" cy="6" r="1"/><circle cx="10.500" cy="6" r="1"/><path d="M4 9q4 5 8 0" fill="none" stroke="#1f74c8" stroke-width="1.500"/></svg>
    <svg viewBox="0 0 16 16"><rect x="5" y="0" width="6" height="10" rx="3"/><path d="M3 7q0 5 5 5t5-5M8 12v3M5 15h6" fill="none" stroke="#1f74c8" stroke-width="1.500"/></svg>
    <svg viewBox="0 0 16 16"><path d="M0 2h16v12H0z"/><path d="M2 5h12M2 8h12" stroke="#fff" stroke-width="1.500" stroke-dasharray="2 1"/><path d="M4 11.500h8" stroke="#fff" stroke-width="1.500"/></svg>
    <svg viewBox="0 0 16 16"><g fill="#b5bfca"><circle cx="6" cy="4" r="3.500"/><path d="M0 13q0-6 6-6t6 6z"/></g><path d="M6 9h10v7H6z" fill="#fff" stroke="#a4afbb"/><path d="M8 11v4M11 11h2v4h-2z" fill="none" stroke="#a4afbb"/></svg>
    <svg viewBox="0 0 16 16"><path d="M1 3l4-2q3 3 6 0l4 2v4h-3v8H4V7H1z"/></svg>
    <svg viewBox="0 0 16 16"><path d="M15 3l-3 3-2-2 3-3q-5-1-6 4l-6 7 2 3 7-7q6 0 5-5z"/></svg>
</div>
</body>
</html>
```
FILE: styles.css
```css
:root {
    --face: #f0f0f0;
    --line: #d4d4d4;
    --edge: #828790;
    --dots: repeating-linear-gradient(to bottom, #888 0 1px, transparent 1px 2px);
    --dots-x: repeating-linear-gradient(to right, #888 0 1px, transparent 1px 2px);
    --bar: linear-gradient(#fdfdfd, #f0f0f0);
    --on: #0078d7;
}
* {
    box-sizing: border-box;
}
body {
    margin: 0;
    height: 100vh;
    display: flex;
    flex-direction: column;
    position: relative;
    overflow: hidden;
    background: var(--face);
    color: #000;
    font: 12px/16px "Open Sans", "Noto Sans CJK SC", sans-serif;
}
button, input, select {
    font: inherit;
    color: inherit;
    margin: 0;
    padding: 0;
    border: 0;
    background: none;
}
button {
    display: flex;
    align-items: center;
    gap: 4px;
    white-space: nowrap;
}
button:disabled {
    color: #858585;
}
a {
    color: inherit;
    text-decoration: none;
}
ul {
    list-style: none;
    margin: 0;
    padding: 0;
}
small {
    font: 10px/16px "DejaVu Sans Mono", "Noto Sans CJK SC", monospace;
}
svg {
    display: block;
    flex: none;
}
.sprite {
    position: absolute;
    width: 0;
    height: 0;
}
.i16 { width: 16px; height: 16px; }
.i14 { width: 14px; height: 14px; }
.i12 { width: 12px; height: 12px; }
.i10 { width: 10px; height: 10px; }
.arrow {
    border: 3px solid transparent;
    border-top-color: currentColor;
    border-bottom: 0;
}
.sep {
    width: 1px;
    height: 20px;
    margin: 0 -1px;
    background: #bbb;
}

/* title + menu */
.titlebar {
    display: flex;
    align-items: center;
    gap: 5px;
    height: 23px;
    flex: none;
    padding-left: 2px;
    background: #fff;
    color: #999;
    font-family: Roboto, "Noto Sans CJK SC", sans-serif;
    font-size: 13px;
}
.title {
    flex: 1;
    white-space: nowrap;
}
.win-buttons {
    display: flex;
}
.win-buttons button {
    width: 46px;
    justify-content: center;
}
.win-buttons svg {
    width: 12px;
    height: 12px;
}
.menubar {
    display: flex;
    align-items: center;
    gap: 11px;
    height: 31px;
    flex: none;
    padding-left: 7px;
    font-family: "Noto Sans", "Noto Sans CJK SC", sans-serif;
}
.menu-right {
    display: flex;
    align-items: center;
    flex: 1;
    gap: 10px;
    height: 29px;
    background: linear-gradient(#fafafa, #f0f0f0);
}
.hint {
    width: 178px;
    padding-left: 33px;
    color: #5c2a00;
}
.coins {
    gap: 8px;
}
.more {
    margin-left: auto;
    width: 18px;
    align-self: flex-start;
    font-size: 14px;
    font-weight: bold;
    line-height: 14px;
}

/* toolbars */
.toolrow {
    display: flex;
    height: 29px;
    flex: none;
}
.toolbar {
    display: flex;
    align-items: center;
    gap: 7px;
    height: 29px;
    flex: none;
    border-radius: 3px;
    background: var(--bar);
}
.file-tools {
    width: 153px;
    padding-left: 4px;
}
.calc-tools {
    width: 549px;
    padding-left: 4px;
}
.view-tools {
    flex: 1;
    margin-left: 3px;
}
.view-tools .arrow {
    margin: 0 1px;
}
.boxed {
    width: 62px;
    height: 22px;
    margin-right: -3px;
    border: 1px solid #777;
    padding-left: 2px;
    gap: 2px;
}
.component-tools {
    padding-left: 4px;
}
.component-tools .sep {
    margin: 0 -2px;
}
.move {
    gap: 8px;
    padding-left: 4px;
}
.combo {
    height: 22px;
    background: #fff;
    appearance: none;
    background-image: linear-gradient(45deg, transparent 50%, #000 50%), linear-gradient(-45deg, transparent 50%, #000 50%);
    background-size: 3px 3px;
    background-position: right 6px center, right 3px center;
    background-repeat: no-repeat;
}
.floor {
    width: 63px;
    padding-left: 2px;
}

/* workspace */
.workspace {
    display: flex;
    flex: 1;
    min-height: 0;
}
.nav {
    display: flex;
    flex-direction: column;
    width: 165px;
    margin: 0 6px 2px 0;
    border-right: 1px solid #999;
}
.nav-head {
    display: flex;
    align-items: center;
    height: 15px;
    flex: none;
    margin: 1px 0 2px;
    border: 1px solid #888;
    border-left: 0;
    font-size: 13px;
    line-height: 13px;
}
.nav-head span {
    flex: 1;
}
.nav-head button {
    width: 17px;
    height: 13px;
    justify-content: center;
}
.nav-head .pin {
    border: 1px solid;
    border-color: #fff #333 #333 #fff;
}
.nav-head svg {
    width: 12px;
    height: 12px;
}
.nav-btn {
    justify-content: center;
    height: 22px;
    flex: none;
    margin-left: 1px;
    border: 1px solid;
    border-color: #fff #a0a0a0 #a0a0a0 #fff;
}
.nav-tools {
    display: flex;
    align-items: center;
    gap: 5px;
    height: 27px;
    flex: none;
    padding-left: 6px;
    background: var(--bar);
}
.nav-tools svg {
    width: 18px;
    height: 16px;
}
.nav-tree {
    display: grid;
    grid-template-columns: 1fr 15px;
    grid-template-rows: 1fr 16px;
    flex: 1;
    min-height: 0;
    margin: 0 0 1px 2px;
    border: 1px solid var(--edge);
    padding: 1px;
}
.tree-view {
    overflow: hidden;
    background: #fff;
}
.node, .tree a {
    display: flex;
    align-items: center;
    flex: none;
    height: 16px;
    white-space: nowrap;
}
.node {
    padding-left: 6px;
}
.node .i16 {
    margin: 0 4px 0 6px;
}
.tree ul {
    padding-left: 30px;
    background: var(--dots) 11px 0 / 1px 100% no-repeat;
}
.tree ul li, .component-list li {
    display: flex;
    align-items: center;
    background: var(--dots) 0 0 / 1px 100% no-repeat;
}
.tree ul li:last-child, .component-list li:last-child {
    background-size: 1px 50%;
}
.tree ul li::before, .component-list li::before {
    content: "";
    flex: none;
    width: 9px;
    height: 1px;
    background: var(--dots-x);
}
.tree a {
    padding: 0 1px 0 2px;
}
.tree a svg {
    margin-right: 4px;
}
.current {
    background: #d9d9d9;
}
.vscroll {
    display: flex;
    flex-direction: column;
    align-items: center;
    padding: 4px 0;
    background: var(--face);
}
.vscroll .thumb {
    width: 15px;
    flex: 0 1 247px;
    margin: 80px 0 auto;
    background: #cdcdcd;
}
.hscroll {
    display: flex;
    align-items: center;
    gap: 4px;
    padding: 0 4px;
}
.hscroll .thumb {
    flex: 1;
    height: 15px;
    background: #cdcdcd;
}
.editor {
    display: flex;
    flex-direction: column;
    flex: 1;
    min-width: 0;
}
.panels {
    display: flex;
    flex: 1;
    min-height: 0;
    padding-bottom: 2px;
}
.components {
    display: flex;
    flex-direction: column;
    width: 183px;
    margin-top: 3px;
    border-right: 1px solid var(--edge);
}
.search {
    display: flex;
    height: 27px;
    flex: none;
    background: #fff;
}
.search input {
    width: 157px;
    height: 24px;
    margin: 2px 0 0 1px;
    padding: 0 2px 4px;
    border: 1px solid #777;
    background: #fff;
}
.search button {
    flex: 1;
    justify-content: center;
}
.component-list {
    flex: 1;
    border: 1px solid var(--edge);
    border-right: 0;
    background: #fff;
    padding-top: 1px;
}
.root {
    display: flex;
    align-items: center;
    height: 16px;
    padding-left: 6px;
    gap: 5px;
}
.root .i16 {
    margin-left: 2px;
}
.component-list ul {
    padding-left: 31px;
}
.component-list a {
    display: flex;
    align-items: center;
    height: 16px;
    gap: 7px;
    padding: 0 4px;
    font: 10px/16px "DejaVu Sans Mono", monospace;
}
.selected {
    background: #316ac5;
}
.properties {
    display: flex;
    flex-direction: column;
    flex: 1;
    min-width: 0;
    margin: 0 3px 0 5px;
    border: 1px solid var(--line);
    background: #fff;
}
.tabs {
    display: flex;
    align-items: flex-end;
    flex: none;
    height: 20px;
}
.tab {
    height: 19px;
    border: 1px solid var(--line);
    padding: 0 6px;
    background: var(--face);
}
.tab.active {
    height: 20px;
    border-bottom: 0;
    background: #fff;
}
.properties .tabs {
    background: linear-gradient(var(--line), var(--line)) bottom / 100% 1px no-repeat;
}
.prop-body {
    display: flex;
    flex-direction: column;
    flex: 1;
    margin: 4px 1px 2px 3px;
    border: 1px solid #a0a0a0;
}
.props {
    width: 100%;
    table-layout: fixed;
    border-collapse: collapse;
}
.props th, .props td {
    height: 19px;
    padding: 0;
    border: 1px solid #c0c0c0;
    border-left: 0;
    font-weight: normal;
    line-height: 16px;
    white-space: nowrap;
}
.props th {
    background: linear-gradient(#fafafa, #ececec);
}
.props thead th {
    height: 23px;
    border-top: 0;
}
.props tbody th {
    font-family: "Liberation Sans", sans-serif;
}
.props .num { width: 20px; }
.props .name { width: 191px; }
.props thead .value {
    padding-right: 662px;
    background: linear-gradient(#fadb9a, #f2c268);
    color: #60004c;
}
.props td:nth-child(2) {
    padding-left: 20px;
}
.props td:nth-child(3) {
    padding-left: 2px;
}
.props .link { color: #00f; }
.props .dim td { color: #808080; }
.props .group td:nth-child(2) { padding-left: 3px; }
.props .group button {
    display: inline-block;
    width: 13px;
    height: 13px;
    margin-right: 4px;
    border: 1px solid #b0b0b0;
    background: #fff;
    color: #000;
    line-height: 11px;
    vertical-align: middle;
}
.props .active th {
    background: #ffd28c;
    color: #60004c;
}
.props .active td:nth-child(2) {
    background: #0078d7;
    color: #fff;
}
.props .active td:nth-child(3) {
    background: #d9e9f8;
}
.props small svg {
    display: inline-block;
    margin: 0 1px;
    vertical-align: middle;
}
.scroll-end {
    margin: auto 0 0 auto;
    background: var(--face);
}
.mark {
    position: absolute;
    left: 528px;
    top: 191px;
    width: 108px;
    height: 87px;
}

/* section dialog */
.dialog {
    position: absolute;
    left: 636px;
    right: 1px;
    top: 120px;
    bottom: 77px;
    display: flex;
    flex-direction: column;
    border: 1px solid #333;
    border-right: 0;
    background: #b9d1ea;
}
.dialog h2 {
    margin: 1px 0 0;
    height: 28px;
    padding: 9px 7px 0;
    background: linear-gradient(#99b4d1, #b9d1ea);
    font-size: 12px;
    font-weight: normal;
}
.dialog-body {
    display: flex;
    flex-direction: column;
    flex: 1;
    min-height: 0;
    margin: 0 0 7px 7px;
    background: var(--face);
}
.dialog .tabs {
    height: 21px;
    padding-left: 2px;
}
.dialog .tab {
    width: 47px;
}
.dialog .tab.active {
    width: 51px;
}
.dialog-main {
    display: flex;
    flex-direction: column;
    flex: 1;
    min-height: 0;
    border-top: 1px solid var(--line);
    border-bottom: 1px solid var(--line);
    padding: 2px 0 3px 5px;
    background: #fff;
}
.dialog .toolbar {
    gap: 6px;
    padding-left: 2px;
}
.dialog .toolbar.plain {
    background: var(--face);
}
.dialog .toolbar button {
    height: 24px;
    padding: 0 2px;
}
.dialog .toolbar .on {
    border: 1px solid var(--on);
    margin: 0 -2px;
    padding: 0 4px;
    background: #dcebf8;
}
.grip {
    width: 2px;
    height: 15px;
    background: repeating-linear-gradient(#bbb 0 2px, transparent 2px 4px);
}
.combo.info {
    width: 135px;
    height: 25px;
    padding-left: 3px;
    border: 1px solid var(--on);
    margin-left: -4px;
}
.combo.arc {
    width: 58px;
    height: 23px;
    border: 1px solid #777;
    background-color: var(--face);
    opacity: .6;
}
.canvas {
    flex: 1;
    width: 100%;
    min-height: 0;
    border: 2px solid #f00;
    border-right: 0;
    background: #000;
}
.axis path {
    stroke: #555;
    stroke-dasharray: 14 3 3 3 3 3;
}
.axis .faint {
    stroke: #333;
}
.outline, .dim-lines, .stirrups, .bars {
    fill: none;
    stroke-width: 2;
}
.outline { stroke: #fff; }
.dim-lines { stroke: #0f0; }
.stirrups {
    stroke: #f00;
    stroke-width: 5;
}
.bars {
    stroke-width: 1.5;
}
.dim-text {
    fill: #fff;
    font: 20px "Liberation Serif", serif;
}
.dim-text .origin {
    fill: #444;
    font-size: 12px;
}
.note-text {
    fill: #fff;
    font: 19px "Noto Sans CJK SC", sans-serif;
}
.note-text .spec {
    fill: #0f0;
    font: 18px "Liberation Serif", serif;
}
.dialog-status {
    display: flex;
    gap: 2px;
    height: 23px;
    flex: none;
    padding-top: 3px;
}
.dialog-status span {
    flex: 1;
    border: 1px solid var(--line);
    padding: 1px;
    background: var(--bar);
}
.dialog-status span:first-child {
    flex: 0 0 147px;
    padding-left: 8px;
}

/* status + taskbar */
.statusbar {
    display: flex;
    gap: 2px;
    height: 21px;
    flex: none;
}
.statusbar span {
    border: 1px solid var(--line);
    padding: 2px 1px 0;
    background: var(--bar);
    white-space: nowrap;
}
.s-blank { width: 148px; }
.s-height { width: 78px; }
.s-base { width: 98px; }
.s-zero { width: 48px; }
.s-msg { flex: 1; }
.s-fps { width: 70px; }
.taskbar {
    display: flex;
    align-items: stretch;
    height: 40px;
    flex: none;
    background: #000c10;
    color: #fff;
}
.start {
    width: 48px;
    justify-content: center;
    background: #000;
}
.cortana {
    display: flex;
    align-items: center;
    width: 344px;
    padding: 0 13px 0 9px;
    background: #303030;
}
.ring {
    width: 21px;
    height: 21px;
    border: 3px solid #eee;
    border-radius: 50%;
}
.cortana input {
    flex: 1;
    padding-left: 6px;
    font-size: 14px;
}
.cortana input::placeholder {
    color: #999;
}
.apps {
    display: flex;
    gap: 2px;
}
.apps button {
    width: 48px;
    height: 40px;
    justify-content: center;
}
.apps .running {
    background: linear-gradient(#76b9ed, #76b9ed) center 38px / 40px 2px no-repeat;
}
.apps .focus {
    background: linear-gradient(#76b9ed, #76b9ed) 0 38px / 48px 2px no-repeat #353f43;
}
.apps svg {
    width: 24px;
    height: 24px;
}
.white { color: #e8e8e8; }
.ie {
    color: #3ba5ea;
    --swoosh: #f6c527;
}
.green {
    color: #5dbf2c;
    --swoosh: #dfe8da;
}
.cpu, .clock {
    text-align: center;
    line-height: 18px;
    padding-top: 2px;
}
.cpu {
    width: 60px;
    margin-left: auto;
}
.tray {
    display: flex;
    align-items: center;
    gap: 9px;
    margin-left: 12px;
}
.tray svg {
    width: 16px;
    height: 16px;
}
.tray .kb {
    width: 24px;
}
.tray span {
    font-weight: bold;
}
.clock {
    width: 60px;
    margin: 0 18px;
}
.notify {
    position: relative;
    width: 42px;
}
.notify svg {
    width: 30px;
    height: 30px;
}
.notify b {
    position: absolute;
    left: 10px;
    top: 18px;
}

/* overlays */
.ball {
    position: absolute;
    left: 912px;
    top: 0;
    width: 60px;
    height: 24px;
}
.ball text {
    fill: #fff;
    font-weight: bold;
    text-anchor: middle;
}
.ime {
    position: absolute;
    left: 1010px;
    top: 3px;
    display: flex;
    align-items: center;
    gap: 6px;
    height: 24px;
    padding-right: 4px;
    border: 1px solid #b8c6d8;
    background: #fdfeff;
    color: #1f74c8;
}
.ime b {
    font-size: 14px;
}
.ime svg {
    width: 16px;
    height: 16px;
    fill: #1f74c8;
}
.ime .ime-logo {
    width: 28px;
    height: 28px;
    margin-left: -10px;
}
```
